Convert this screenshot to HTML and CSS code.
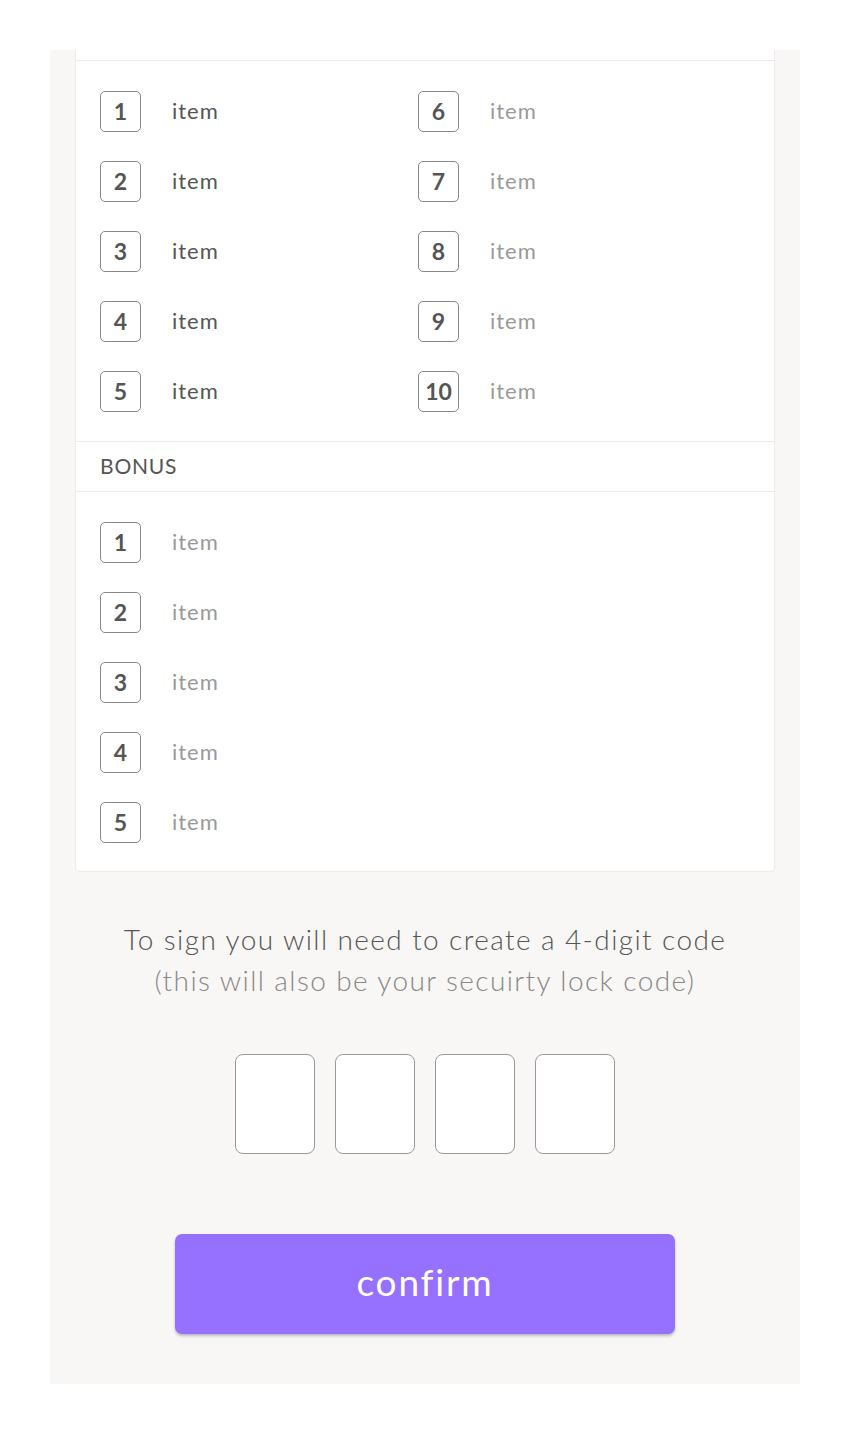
FILE: index.html
```html
<!DOCTYPE html>
<html lang="en">
<head>
    <meta charset="UTF-8">
    <meta name="viewport" content="width=device-width, initial-scale=1.0">
    <title>Sign Code</title>
    <link rel="stylesheet" href="styles.css">
</head>
<body>
    <div class="panel">
        <div class="card">
            <div class="card-head"></div>
            <div class="item-list two-col">
                <div class="item"><span class="num">1</span><span class="label">item</span></div>
                <div class="item"><span class="num">6</span><span class="label light">item</span></div>
                <div class="item"><span class="num">2</span><span class="label">item</span></div>
                <div class="item"><span class="num">7</span><span class="label light">item</span></div>
                <div class="item"><span class="num">3</span><span class="label">item</span></div>
                <div class="item"><span class="num">8</span><span class="label light">item</span></div>
                <div class="item"><span class="num">4</span><span class="label">item</span></div>
                <div class="item"><span class="num">9</span><span class="label light">item</span></div>
                <div class="item"><span class="num">5</span><span class="label">item</span></div>
                <div class="item"><span class="num">10</span><span class="label light">item</span></div>
            </div>
            <div class="section-title">BONUS</div>
            <div class="item-list last">
                <div class="item"><span class="num">1</span><span class="label light">item</span></div>
                <div class="item"><span class="num">2</span><span class="label light">item</span></div>
                <div class="item"><span class="num">3</span><span class="label light">item</span></div>
                <div class="item"><span class="num">4</span><span class="label light">item</span></div>
                <div class="item"><span class="num">5</span><span class="label light">item</span></div>
            </div>
        </div>

        <p class="info">
            To sign you will need to create a 4-digit code<br>
            <span class="sub">(this will also be your secuirty lock code)</span>
        </p>

        <div class="code-boxes">
            <input type="text" maxlength="1" class="code">
            <input type="text" maxlength="1" class="code">
            <input type="text" maxlength="1" class="code">
            <input type="text" maxlength="1" class="code">
        </div>

        <button class="confirm">confirm</button>
    </div>
</body>
</html>
```

FILE: styles.css
```css
body {
    margin: 0;
    background: #fff;
    font-family: Lato, "Open Sans", sans-serif;
    color: #555;
}
.panel {
    width: 700px;
    margin: 50px auto;
    padding: 0 25px 50px;
    background: #f8f7f5;
}
.card {
    background: #fff;
    border: 1px solid #ececec;
    border-top: none;
    border-radius: 0 0 5px 5px;
}
.card-head {
    height: 10px;
    border-bottom: 1px solid #ececec;
}
.item-list {
    padding: 15px 24px;
}
.item-list.last {
    padding-bottom: 14px;
}
.two-col {
    display: grid;
    grid-template-columns: 318px 1fr;
}
.item {
    height: 70px;
    display: flex;
    align-items: center;
}
.num {
    width: 41px;
    height: 41px;
    box-sizing: border-box;
    border: 1px solid #888;
    border-radius: 5px;
    display: flex;
    align-items: center;
    justify-content: center;
    padding-bottom: 1px;
    font-size: 23px;
    font-weight: bold;
    color: #555;
}
.label {
    margin-left: 31px;
    margin-bottom: 1px;
    font-size: 22px;
    letter-spacing: 1px;
    color: #555;
}
.label.light {
    color: #999;
}
.section-title {
    height: 49px;
    line-height: 48px;
    padding: 0 24px;
    border-top: 1px solid #ececec;
    border-bottom: 1px solid #ececec;
    font-size: 21px;
    letter-spacing: 0.8px;
    color: #555;
}
.info {
    margin: 47px 0 0;
    text-align: center;
    font-size: 28px;
    line-height: 41px;
    font-weight: 300;
    letter-spacing: 1.4px;
    color: #555;
}
.info .sub {
    color: #888;
}
.code-boxes {
    display: flex;
    justify-content: center;
    gap: 20px;
    margin-top: 53px;
}
.code {
    width: 80px;
    height: 100px;
    box-sizing: border-box;
    border: 1px solid #999;
    border-radius: 8px;
    background: #fff;
    text-align: center;
    font-size: 40px;
}
.confirm {
    display: block;
    width: 500px;
    height: 100px;
    margin: 80px auto 0;
    padding: 0 0 5px;
    background: #9670fe;
    color: #fff;
    border: none;
    border-radius: 7px;
    box-shadow: 0 2px 3px rgba(0, 0, 0, 0.25);
    font-family: Lato, sans-serif;
    font-size: 37px;
    letter-spacing: 1.8px;
    cursor: pointer;
}
```
